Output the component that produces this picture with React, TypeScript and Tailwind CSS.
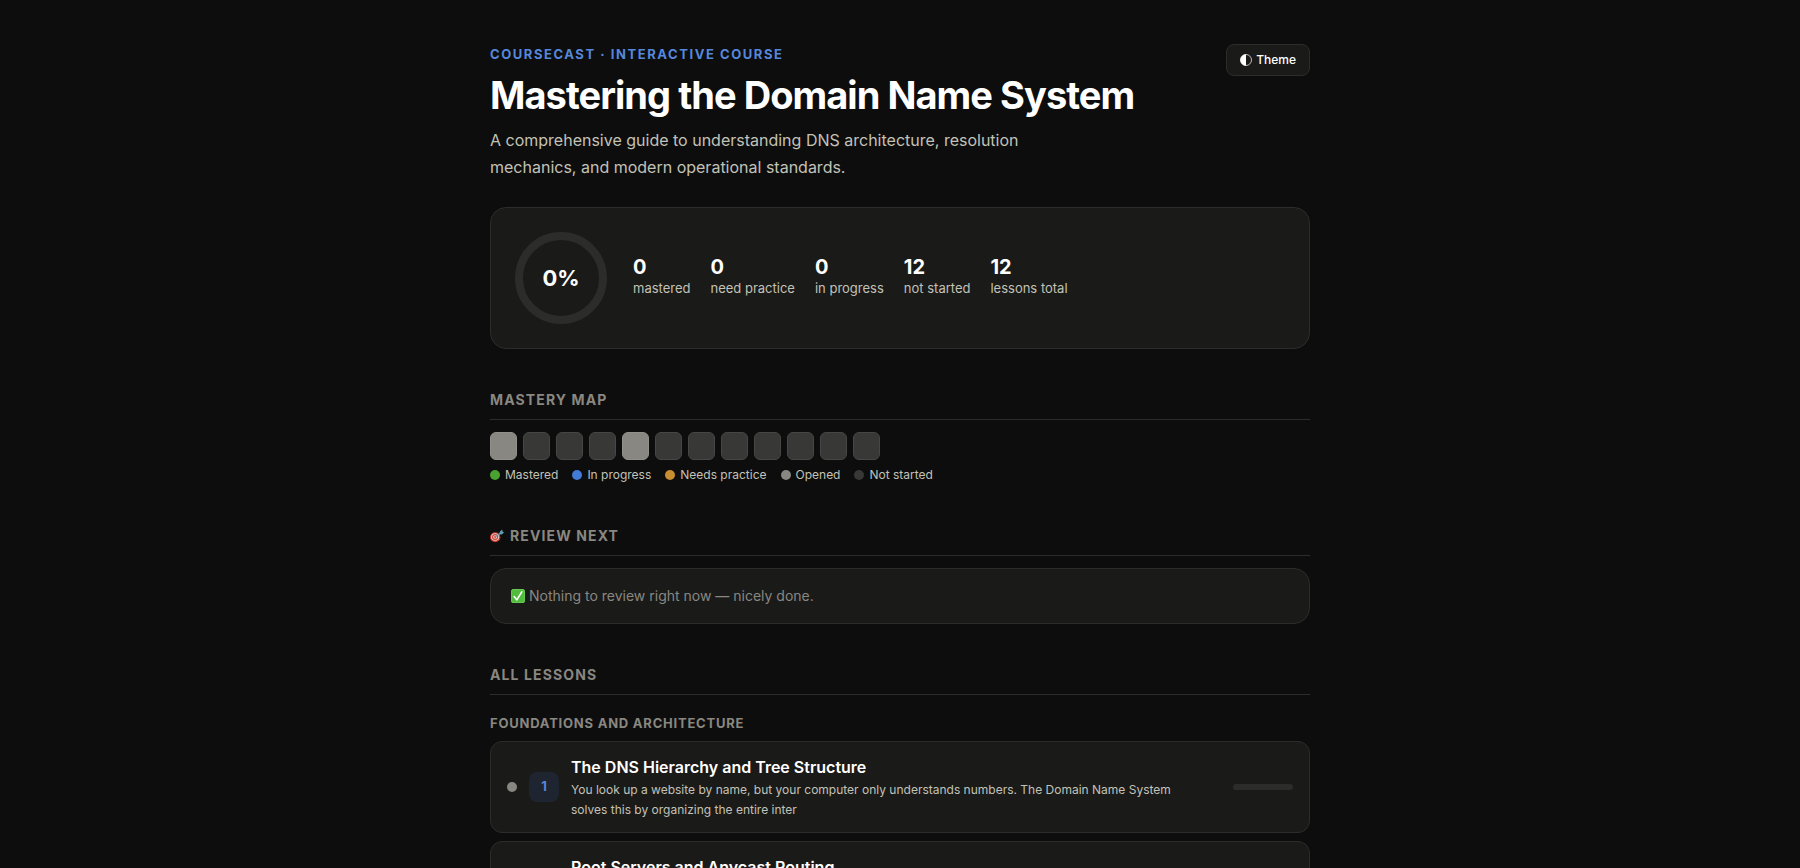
import { useState } from "react";

type Status = "mastered" | "progress" | "practice" | "opened" | "none";

interface Lesson {
  id: number;
  title: string;
  summary: string;
  status: Status;
  progress: number;
}

const statusColor: Record<Status, string> = {
  mastered: "bg-[#4aa331]",
  progress: "bg-[#437bd8]",
  practice: "bg-[#c78d30]",
  opened: "bg-[#898781]",
  none: "bg-[#383836]",
};

const stats = [
  { value: 0, label: "mastered" },
  { value: 0, label: "need practice" },
  { value: 0, label: "in progress" },
  { value: 12, label: "not started" },
  { value: 12, label: "lessons total" },
];

const legend: { status: Status; label: string }[] = [
  { status: "mastered", label: "Mastered" },
  { status: "progress", label: "In progress" },
  { status: "practice", label: "Needs practice" },
  { status: "opened", label: "Opened" },
  { status: "none", label: "Not started" },
];

const map: Status[] = [
  "opened", "none", "none", "none", "opened", "none",
  "none", "none", "none", "none", "none", "none",
];

const lessons: Lesson[] = [
  {
    id: 1,
    title: "The DNS Hierarchy and Tree Structure",
    summary:
      "You look up a website by name, but your computer only understands numbers. The Domain Name System solves this by organizing the entire inter",
    status: "opened",
    progress: 0,
  },
  {
    id: 2,
    title: "Root Servers and Anycast Routing",
    summary: "",
    status: "none",
    progress: 0,
  },
];

function HalfCircleIcon() {
  return (
    <svg viewBox="0 0 12 12" className="h-3 w-3" aria-hidden="true">
      <circle cx="6" cy="6" r="5.5" fill="none" stroke="currentColor" strokeWidth="0.7" />
      <path d="M6 0.3a5.7 5.7 0 0 0 0 11.4z" fill="currentColor" />
    </svg>
  );
}

function TargetIcon() {
  return (
    <svg viewBox="0 0 14 14" className="h-3.5 w-3.5" aria-hidden="true">
      <ellipse cx="5.2" cy="8.2" rx="5.2" ry="5" fill="#c9372f" />
      <ellipse cx="5.1" cy="8" rx="4" ry="3.8" fill="#e9d6d0" />
      <ellipse cx="5.1" cy="8" rx="3.1" ry="2.9" fill="#cf4037" />
      <ellipse cx="5.1" cy="8" rx="2" ry="1.8" fill="#f1dcd8" />
      <circle cx="5.1" cy="8" r="1" fill="#c9372f" />
      <path d="M5.4 7.8L11 3.8" stroke="#6f9aa8" strokeWidth="1.4" />
      <path d="M9.2 5.2L10 2.4l2.2-1.8.3 2 1.5.6-2.1 2.2z" fill="#5aa3b5" />
    </svg>
  );
}

function CheckIcon() {
  return (
    <svg viewBox="0 0 14 14" className="h-3.5 w-3.5" aria-hidden="true">
      <rect width="14" height="14" rx="2.6" fill="#52bd3c" />
      <rect x="0.4" y="0.4" width="13.2" height="13.2" rx="2.3" fill="none" stroke="#6fce58" strokeWidth="0.8" />
      <path d="M3.1 7.6l2.7 3.2 5-8" fill="none" stroke="#fff" strokeWidth="1.6" strokeLinecap="round" strokeLinejoin="round" />
    </svg>
  );
}

function SectionTitle({ children }: { children: React.ReactNode }) {
  return (
    <h2 className="mb-3 flex items-center gap-1.5 border-b border-[#2c2c2a] pb-2 text-sm leading-[22px] font-bold tracking-[0.08em] text-[#898781] uppercase">
      {children}
    </h2>
  );
}

function ProgressRing({ percent }: { percent: number }) {
  const length = 2 * Math.PI * 42;
  return (
    <div className="grid h-[92px] w-[92px] shrink-0 place-items-center">
      <svg viewBox="0 0 92 92" className="col-start-1 row-start-1 h-full w-full -rotate-90" aria-hidden="true">
        <circle cx="46" cy="46" r="42" fill="none" stroke="#2c2c2a" strokeWidth="8" />
        {percent > 0 && (
          <circle
            cx="46"
            cy="46"
            r="42"
            fill="none"
            stroke="#4aa331"
            strokeWidth="8"
            strokeDasharray={`${(length * percent) / 100} ${length}`}
          />
        )}
      </svg>
      <span className="col-start-1 row-start-1 text-[22px] font-bold">{percent}%</span>
    </div>
  );
}

function LessonCard({ lesson }: { lesson: Lesson }) {
  return (
    <a
      href={`#lesson-${lesson.id}`}
      className="flex min-h-[92px] items-center gap-3 rounded-xl border border-[#2c2c2a] bg-[#1a1a19] px-4 py-3"
    >
      <span className={`h-2.5 w-2.5 shrink-0 rounded-full ${statusColor[lesson.status]}`} />
      <span className="grid h-[30px] w-[30px] shrink-0 place-items-center rounded-lg bg-[#1e2530] text-[13px] font-bold text-[#5588dc]">
        {lesson.id}
      </span>
      <div className="min-w-0 flex-1 self-start">
        <h4 className="text-base leading-[26px] font-semibold">{lesson.title}</h4>
        <p className="max-w-[630px] text-xs leading-5 text-[#c3c2b7]">{lesson.summary}</p>
      </div>
      <div className="h-1.5 w-[60px] shrink-0 overflow-hidden rounded-full bg-[#2c2c2a]">
        <div className="h-full bg-[#4aa331]" style={{ width: `${lesson.progress}%` }} />
      </div>
    </a>
  );
}

function App() {
  const [dark, setDark] = useState(true);

  return (
    <div
      className={`min-h-screen bg-[#0d0d0d] font-['Inter','Liberation_Sans',sans-serif] text-white ${
        dark ? "" : "invert"
      }`}
    >
      <main className="mx-auto max-w-[860px] px-5 pt-11 pb-16">
        <header className="flex items-start justify-between">
          <div>
            <p className="text-[13px] leading-5 font-bold tracking-[0.12em] text-[#5588dc] uppercase">
              Coursecast · Interactive Course
            </p>
            <h1 className="mt-2 text-[38px] leading-[46px] font-bold tracking-tight">
              Mastering the Domain Name System
            </h1>
            <p className="mt-[9px] max-w-[580px] text-base leading-[27px] text-[#c3c2b7]">
              A comprehensive guide to understanding DNS architecture, resolution mechanics, and modern
              operational standards.
            </p>
          </div>
          <button
            type="button"
            onClick={() => setDark(!dark)}
            className="flex h-8 items-center gap-1 rounded-lg border border-[#2c2c2a] bg-[#1a1a19] px-[13px] text-xs font-medium"
          >
            <HalfCircleIcon />
            Theme
          </button>
        </header>

        <section className="mt-[26px] flex items-center gap-[26px] rounded-2xl border border-[#2c2c2a] bg-[#1a1a19] p-6">
          <ProgressRing percent={0} />
          <div className="flex flex-wrap gap-5">
            {stats.map((stat) => (
              <div key={stat.label}>
                <div className="text-xl leading-5 font-bold">{stat.value}</div>
                <div className="text-[13px] leading-[22px] text-[#c3c2b7]">{stat.label}</div>
              </div>
            ))}
          </div>
        </section>

        <section className="mt-10">
          <SectionTitle>Mastery map</SectionTitle>
          <div className="flex flex-wrap gap-1.5">
            {map.map((status, i) => (
              <a
                key={i}
                href={`#lesson-${i + 1}`}
                aria-label={`Lesson ${i + 1}`}
                className={`h-7 w-[27px] rounded-md border ${statusColor[status]} ${
                  status === "none" ? "border-[#464644]" : "border-[#92908a]"
                }`}
              />
            ))}
          </div>
          <ul className="mt-[5px] flex flex-wrap gap-3.5 text-xs leading-5 text-[#c3c2b7]">
            {legend.map((item) => (
              <li key={item.status} className="flex items-center gap-[5px]">
                <span className={`h-2.5 w-2.5 rounded-full ${statusColor[item.status]}`} />
                {item.label}
              </li>
            ))}
          </ul>
        </section>

        <section className="mt-10">
          <SectionTitle>
            <TargetIcon />
            Review next
          </SectionTitle>
          <div className="flex h-14 items-center gap-1 rounded-2xl border border-[#2c2c2a] bg-[#1a1a19] px-5 text-sm text-[#898781]">
            <CheckIcon />
            Nothing to review right now — nicely done.
          </div>
        </section>

        <section className="mt-10">
          <SectionTitle>All lessons</SectionTitle>
          <h3 className="mt-[18px] mb-2 text-[13px] leading-5 font-bold tracking-[0.06em] text-[#898781] uppercase">
            Foundations and Architecture
          </h3>
          <div className="flex flex-col gap-2">
            {lessons.map((lesson) => (
              <LessonCard key={lesson.id} lesson={lesson} />
            ))}
          </div>
        </section>
      </main>
    </div>
  );
}

export default App;
